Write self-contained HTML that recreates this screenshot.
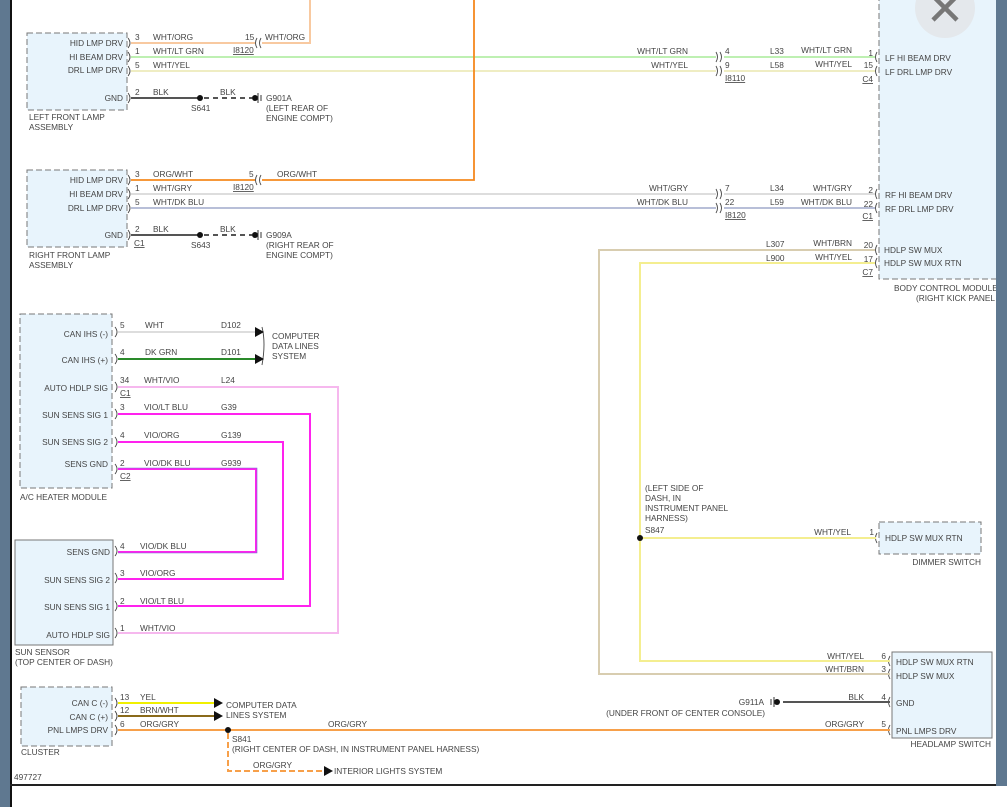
<!DOCTYPE html>
<html><head><meta charset="utf-8"><style>
html,body{margin:0;padding:0;background:#fff;}
svg{display:block;}
text{font-family:"Liberation Sans",Arial,sans-serif;font-size:8.3px;fill:#444;}
.r{text-anchor:end;}
.u{text-decoration:underline;}
</style></head><body>
<svg width="1007" height="807" viewBox="0 0 1007 807" xmlns="http://www.w3.org/2000/svg">
<rect width="1007" height="807" fill="#fff"/>
<!-- frame -->
<rect x="0" y="0" width="10" height="807" fill="#5f7890"/>
<rect x="10" y="0" width="2" height="807" fill="#111"/>
<rect x="996" y="0" width="11" height="786" fill="#5f7890"/>
<rect x="10" y="784" width="997" height="2" fill="#222"/>

<!-- BCM box -->
<rect x="879" y="-2" width="130" height="281" fill="#e8f4fc" stroke="#777" stroke-dasharray="6,3"/>
<circle cx="945" cy="8" r="30" fill="#e4e8ec"/>
<path d="M933 -4 L957 20 M957 -4 L933 20" stroke="#777" stroke-width="4.5"/>
<text x="885" y="61">LF HI BEAM DRV</text>
<text x="885" y="75">LF DRL LMP DRV</text>
<text x="885" y="198">RF HI BEAM DRV</text>
<text x="885" y="212">RF DRL LMP DRV</text>
<text x="884" y="253">HDLP SW MUX</text>
<text x="884" y="266">HDLP SW MUX RTN</text>
<text x="894" y="291">BODY CONTROL MODULE</text>
<text x="916" y="301">(RIGHT KICK PANEL</text>
<rect x="996" y="0" width="11" height="786" fill="#5f7890"/>

<!-- Left front lamp -->
<rect x="27" y="33" width="100" height="77" fill="#e8f4fc" stroke="#777" stroke-dasharray="6,3"/>
<text class="r" x="123" y="46">HID LMP DRV</text>
<text class="r" x="123" y="60">HI BEAM DRV</text>
<text class="r" x="123" y="73">DRL LMP DRV</text>
<text class="r" x="123" y="101">GND</text>
<text x="29" y="120">LEFT FRONT LAMP</text>
<text x="29" y="130">ASSEMBLY</text>
<path d="M310 0 V43 H262" stroke="#f8c9a0" stroke-width="2" fill="none"/>
<path d="M131 43 H255" stroke="#f8c9a0" stroke-width="2"/>
<path d="M131 57 H716 M724 57 H875" stroke="#a8ec98" stroke-width="1.6"/>
<path d="M131 71 H716 M724 71 H875" stroke="#f0ec98" stroke-width="1.6"/>
<path d="M131 71 H716 M724 71 H875" stroke="#ddd" stroke-width="0.6"/>
<path d="M131 98 H200" stroke="#555" stroke-width="2"/>
<path d="M204 98 H252" stroke="#555" stroke-width="2" stroke-dasharray="5,4"/>
<circle cx="200" cy="98" r="3" fill="#111"/>
<circle cx="255" cy="98" r="3" fill="#111"/>
<path d="M258 93 V103 M261 95 V101" stroke="#333" stroke-width="1"/>
<text x="135" y="40">3</text><text x="153" y="40">WHT/ORG</text>
<text x="245" y="40">15</text><text x="265" y="40">WHT/ORG</text>
<text class="u" x="233" y="53">I8120</text>
<text x="135" y="54">1</text><text x="153" y="54">WHT/LT GRN</text>
<text x="135" y="68">5</text><text x="153" y="68">WHT/YEL</text>
<text x="135" y="95">2</text><text x="153" y="95">BLK</text>
<text x="220" y="95">BLK</text>
<text x="191" y="111">S641</text>
<text x="266" y="101">G901A</text>
<text x="266" y="111">(LEFT REAR OF</text>
<text x="266" y="121">ENGINE COMPT)</text>

<!-- Right front lamp -->
<rect x="27" y="170" width="100" height="77" fill="#e8f4fc" stroke="#777" stroke-dasharray="6,3"/>
<text class="r" x="123" y="183">HID LMP DRV</text>
<text class="r" x="123" y="197">HI BEAM DRV</text>
<text class="r" x="123" y="211">DRL LMP DRV</text>
<text class="r" x="123" y="238">GND</text>
<text x="29" y="258">RIGHT FRONT LAMP</text>
<text x="29" y="268">ASSEMBLY</text>
<path d="M131 180 H255 M262 180 H474 V0" stroke="#f5891f" stroke-width="1.8" fill="none"/>
<path d="M131 194 H716 M724 194 H875" stroke="#ddd" stroke-width="2"/>
<path d="M131 208 H716 M724 208 H875" stroke="#b8bfd8" stroke-width="2"/>
<path d="M131 235 H200" stroke="#555" stroke-width="2"/>
<path d="M204 235 H252" stroke="#555" stroke-width="2" stroke-dasharray="5,4"/>
<circle cx="200" cy="235" r="3" fill="#111"/>
<circle cx="255" cy="235" r="3" fill="#111"/>
<path d="M258 230 V240 M261 232 V238" stroke="#333"/>
<text x="135" y="177">3</text><text x="153" y="177">ORG/WHT</text>
<text x="249" y="177">5</text><text x="277" y="177">ORG/WHT</text>
<text class="u" x="233" y="190">I8120</text>
<text x="135" y="191">1</text><text x="153" y="191">WHT/GRY</text>
<text x="135" y="205">5</text><text x="153" y="205">WHT/DK BLU</text>
<text x="135" y="232">2</text><text x="153" y="232">BLK</text>
<text x="220" y="232">BLK</text>
<text class="u" x="134" y="246">C1</text>
<text x="191" y="248">S643</text>
<text x="266" y="238">G909A</text>
<text x="266" y="248">(RIGHT REAR OF</text>
<text x="266" y="258">ENGINE COMPT)</text>

<!-- connector glyphs -->
<g stroke="#444" fill="none" stroke-width="0.9">
<path d="M257 38 q-3 5 0 10 M261 38 q-3 5 0 10"/>
<path d="M257 175 q-3 5 0 10 M261 175 q-3 5 0 10"/>
<path d="M716 52 q3 5 0 10 M720 52 q3 5 0 10 M716 66 q3 5 0 10 M720 66 q3 5 0 10"/>
<path d="M716 189 q3 5 0 10 M720 189 q3 5 0 10 M716 203 q3 5 0 10 M720 203 q3 5 0 10"/>
<path d="M877 52 q-3 5 0 10 M877 66 q-3 5 0 10 M877 189 q-3 5 0 10 M877 203 q-3 5 0 10 M877 245 q-3 5 0 10 M877 258 q-3 5 0 10"/>
<path d="M877 533 q-3 5 0 10 M890 656 q-3 5 0 10 M890 669 q-3 5 0 10 M890 697 q-3 5 0 10 M890 725 q-3 5 0 10"/>
<path d="M128 38 q4 5 0 10 M128 52 q4 5 0 10 M128 66 q4 5 0 10 M128 93 q4 5 0 10"/>
<path d="M128 175 q4 5 0 10 M128 189 q4 5 0 10 M128 203 q4 5 0 10 M128 230 q4 5 0 10"/>
<path d="M115 327 q4 5 0 10 M115 354 q4 5 0 10 M115 382 q4 5 0 10 M115 409 q4 5 0 10 M115 437 q4 5 0 10 M115 464 q4 5 0 10"/>
<path d="M115 546 q4 5 0 10 M115 573 q4 5 0 10 M115 601 q4 5 0 10 M115 628 q4 5 0 10"/>
<path d="M115 698 q4 5 0 10 M115 711 q4 5 0 10 M115 725 q4 5 0 10"/>
<path d="M262 327 q4 16 0 38"/>
</g>
<text x="725" y="54">4</text><text x="725" y="68">9</text>
<text class="u" x="725" y="81">I8110</text>
<text x="725" y="191">7</text><text x="725" y="205">22</text>
<text class="u" x="725" y="218">I8120</text>
<text class="r" x="688" y="54">WHT/LT GRN</text><text class="r" x="688" y="68">WHT/YEL</text>
<text class="r" x="688" y="191">WHT/GRY</text><text class="r" x="688" y="205">WHT/DK BLU</text>
<text x="770" y="54">L33</text><text x="770" y="68">L58</text>
<text x="770" y="191">L34</text><text x="770" y="205">L59</text>
<text x="766" y="247">L307</text><text x="766" y="261">L900</text>
<text class="r" x="852" y="53">WHT/LT GRN</text><text class="r" x="852" y="67">WHT/YEL</text>
<text class="r" x="852" y="191">WHT/GRY</text><text class="r" x="852" y="205">WHT/DK BLU</text>
<text class="r" x="852" y="246">WHT/BRN</text><text class="r" x="852" y="260">WHT/YEL</text>
<text class="r" x="873" y="56">1</text><text class="r" x="873" y="68">15</text>
<text class="r u" x="873" y="82">C4</text>
<text class="r" x="873" y="193">2</text><text class="r" x="873" y="207">22</text>
<text class="r u" x="873" y="219">C1</text>
<text class="r" x="873" y="248">20</text><text class="r" x="873" y="262">17</text>
<text class="r u" x="873" y="275">C7</text>

<!-- right wires -->
<path d="M875 250 H599 V674 H890" stroke="#d8cdb0" stroke-width="2" fill="none"/>
<path d="M875 263 H640 V661 H890" stroke="#f4ee90" stroke-width="2" fill="none"/>
<path d="M640 538 H876" stroke="#f4ee90" stroke-width="2"/>
<circle cx="640" cy="538" r="3" fill="#111"/>
<text x="645" y="491">(LEFT SIDE OF</text>
<text x="645" y="501">DASH, IN</text>
<text x="645" y="511">INSTRUMENT PANEL</text>
<text x="645" y="521">HARNESS)</text>
<text x="645" y="533">S847</text>
<text class="r" x="851" y="535">WHT/YEL</text><text class="r" x="874" y="535">1</text>
<rect x="879" y="522" width="102" height="32" fill="#e8f4fc" stroke="#777" stroke-dasharray="6,3"/>
<text x="885" y="541">HDLP SW MUX RTN</text>
<text class="r" x="981" y="565">DIMMER SWITCH</text>

<rect x="892" y="652" width="100" height="86" fill="#e8f4fc" stroke="#777"/>
<text x="896" y="665">HDLP SW MUX RTN</text>
<text x="896" y="679">HDLP SW MUX</text>
<text x="896" y="706">GND</text>
<text x="896" y="734">PNL LMPS DRV</text>
<text class="r" x="991" y="747">HEADLAMP SWITCH</text>
<text class="r" x="864" y="659">WHT/YEL</text><text class="r" x="886" y="659">6</text>
<text class="r" x="864" y="672">WHT/BRN</text><text class="r" x="886" y="672">3</text>
<text class="r" x="864" y="700">BLK</text><text class="r" x="886" y="700">4</text>
<text class="r" x="864" y="727">ORG/GRY</text><text class="r" x="886" y="727">5</text>
<path d="M783 702 H890" stroke="#555" stroke-width="2"/>
<circle cx="777" cy="702" r="3" fill="#111"/>
<path d="M774 697 V707 M771 699 V705" stroke="#333"/>
<text class="r" x="764" y="705">G911A</text>
<text class="r" x="765" y="716">(UNDER FRONT OF CENTER CONSOLE)</text>

<!-- A/C heater module -->
<rect x="20" y="314" width="92" height="174" fill="#e8f4fc" stroke="#777" stroke-dasharray="6,3"/>
<text class="r" x="108" y="337">CAN IHS (-)</text>
<text class="r" x="108" y="363">CAN IHS (+)</text>
<text class="r" x="108" y="391">AUTO HDLP SIG</text>
<text class="r" x="108" y="418">SUN SENS SIG 1</text>
<text class="r" x="108" y="445">SUN SENS SIG 2</text>
<text class="r" x="108" y="467">SENS GND</text>
<text x="20" y="500">A/C HEATER MODULE</text>
<path d="M118 332 H256" stroke="#ddd" stroke-width="2"/>
<path d="M118 359 H256" stroke="#2a8a2a" stroke-width="2"/>
<path d="M255 327 L264 332 L255 337Z M255 354 L264 359 L255 364Z" fill="#111"/>
<path d="M118 387 H338 V633 H118" stroke="#f6b8ee" stroke-width="2" fill="none"/>
<path d="M118 414 H310 V606 H118" stroke="#ff22ee" stroke-width="2" fill="none"/>
<path d="M118 442 H283 V579 H118" stroke="#ff22ee" stroke-width="2" fill="none"/>
<path d="M118 469 H256 V552 H118" stroke="#ff22ee" stroke-width="2" fill="none"/>
<path d="M118 468 H257 V553 H118" stroke="#7070d0" stroke-width="0.6" fill="none"/>
<text x="120" y="328">5</text><text x="145" y="328">WHT</text><text x="221" y="328">D102</text>
<text x="120" y="355">4</text><text x="145" y="355">DK GRN</text><text x="221" y="355">D101</text>
<text x="120" y="383">34</text><text x="144" y="383">WHT/VIO</text><text x="221" y="383">L24</text>
<text class="u" x="120" y="396">C1</text>
<text x="120" y="410">3</text><text x="144" y="410">VIO/LT BLU</text><text x="221" y="410">G39</text>
<text x="120" y="438">4</text><text x="144" y="438">VIO/ORG</text><text x="221" y="438">G139</text>
<text x="120" y="466">2</text><text x="144" y="466">VIO/DK BLU</text><text x="221" y="466">G939</text>
<text class="u" x="120" y="479">C2</text>
<text x="272" y="339">COMPUTER</text>
<text x="272" y="349">DATA LINES</text>
<text x="272" y="359">SYSTEM</text>

<!-- Sun sensor -->
<rect x="15" y="540" width="98" height="105" fill="#e8f4fc" stroke="#777"/>
<text class="r" x="110" y="555">SENS GND</text>
<text class="r" x="110" y="583">SUN SENS SIG 2</text>
<text class="r" x="110" y="610">SUN SENS SIG 1</text>
<text class="r" x="110" y="638">AUTO HDLP SIG</text>
<text x="15" y="655">SUN SENSOR</text>
<text x="15" y="665">(TOP CENTER OF DASH)</text>
<text x="120" y="549">4</text><text x="140" y="549">VIO/DK BLU</text>
<text x="120" y="576">3</text><text x="140" y="576">VIO/ORG</text>
<text x="120" y="604">2</text><text x="140" y="604">VIO/LT BLU</text>
<text x="120" y="631">1</text><text x="140" y="631">WHT/VIO</text>

<!-- Cluster -->
<rect x="21" y="687" width="91" height="59" fill="#e8f4fc" stroke="#777" stroke-dasharray="6,3"/>
<text class="r" x="108" y="706">CAN C (-)</text>
<text class="r" x="108" y="720">CAN C (+)</text>
<text class="r" x="108" y="733">PNL LMPS DRV</text>
<text x="21" y="755">CLUSTER</text>
<text x="14" y="780">497727</text>
<path d="M118 703 H216" stroke="#f0f000" stroke-width="2"/>
<path d="M118 716 H216" stroke="#8a6a1a" stroke-width="2"/>
<path d="M214 698 L223 703 L214 708Z M214 711 L223 716 L214 721Z" fill="#111"/>
<path d="M118 730 H890" stroke="#f7a04a" stroke-width="2"/>
<circle cx="228" cy="730" r="3" fill="#111"/>
<path d="M228 733 V771 H324" stroke="#f7a04a" stroke-width="2" fill="none" stroke-dasharray="6,3"/>
<path d="M324 766 L333 771 L324 776Z" fill="#111"/>
<text x="120" y="700">13</text><text x="140" y="700">YEL</text>
<text x="120" y="713">12</text><text x="140" y="713">BRN/WHT</text>
<text x="120" y="727">6</text><text x="140" y="727">ORG/GRY</text>
<text x="226" y="708">COMPUTER DATA</text>
<text x="226" y="718">LINES SYSTEM</text>
<text x="328" y="727">ORG/GRY</text>
<text x="232" y="742">S841</text>
<text x="232" y="752">(RIGHT CENTER OF DASH, IN INSTRUMENT PANEL HARNESS)</text>
<text x="253" y="768">ORG/GRY</text>
<text x="334" y="774">INTERIOR LIGHTS SYSTEM</text>
</svg>
</body></html>
